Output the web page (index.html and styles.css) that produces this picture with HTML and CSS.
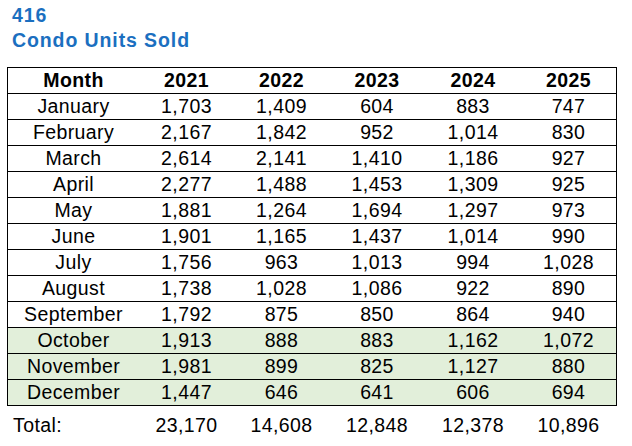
FILE: index.html
```html
<!DOCTYPE html>
<html>
<head>
<meta charset="utf-8">
<link rel="stylesheet" href="styles.css">
</head>
<body>
<div class="sheet">
  <div class="title">416<br>Condo Units Sold</div>
  <div class="table">
    <div class="row head"><span>Month</span><span>2021</span><span>2022</span><span>2023</span><span>2024</span><span>2025</span></div>
    <div class="row"><span>January</span><span>1,703</span><span>1,409</span><span>604</span><span>883</span><span>747</span></div>
    <div class="row"><span>February</span><span>2,167</span><span>1,842</span><span>952</span><span>1,014</span><span>830</span></div>
    <div class="row"><span>March</span><span>2,614</span><span>2,141</span><span>1,410</span><span>1,186</span><span>927</span></div>
    <div class="row"><span>April</span><span>2,277</span><span>1,488</span><span>1,453</span><span>1,309</span><span>925</span></div>
    <div class="row"><span>May</span><span>1,881</span><span>1,264</span><span>1,694</span><span>1,297</span><span>973</span></div>
    <div class="row"><span>June</span><span>1,901</span><span>1,165</span><span>1,437</span><span>1,014</span><span>990</span></div>
    <div class="row"><span>July</span><span>1,756</span><span>963</span><span>1,013</span><span>994</span><span>1,028</span></div>
    <div class="row"><span>August</span><span>1,738</span><span>1,028</span><span>1,086</span><span>922</span><span>890</span></div>
    <div class="row"><span>September</span><span>1,792</span><span>875</span><span>850</span><span>864</span><span>940</span></div>
    <div class="row green"><span>October</span><span>1,913</span><span>888</span><span>883</span><span>1,162</span><span>1,072</span></div>
    <div class="row green"><span>November</span><span>1,981</span><span>899</span><span>825</span><span>1,127</span><span>880</span></div>
    <div class="row green last"><span>December</span><span>1,447</span><span>646</span><span>641</span><span>606</span><span>694</span></div>
  </div>
  <div class="row total"><span class="label">Total:</span><span>23,170</span><span>14,608</span><span>12,848</span><span>12,378</span><span>10,896</span></div>
</div>
</body>
</html>
```

FILE: styles.css
```css
html, body {
  margin: 0;
  padding: 0;
  background: #ffffff;
}

.sheet {
  width: 632px;
  height: 446px;
  font-family: "Liberation Sans", Arial, sans-serif;
  color: #000;
  overflow: hidden;
}

.title {
  padding: 3px 0 0 12px;
  font-size: 19.5px;
  line-height: 25px;
  font-weight: bold;
  color: #1b6fc0;
  letter-spacing: 0.9px;
}

.table {
  margin: 14px 0 0 7px;
  width: 608px;
  border: 1px solid #000;
}

.row {
  display: grid;
  grid-template-columns: 131px 95px 95px 96px 96px 95px;
  height: 25px;
  line-height: 25px;
  font-size: 19.5px;
  letter-spacing: 0.4px;
  border-bottom: 1px solid #000;
}

.row span {
  text-align: center;
  white-space: nowrap;
}

.row.last {
  border-bottom: none;
}

.head {
  font-weight: bold;
}

.green {
  background: #e2efda;
}

.total {
  border-bottom: none;
  margin-left: 8px;
  padding-top: 7px;
  height: 25px;
}

.total .label {
  text-align: left;
  padding-left: 5px;
}
```
